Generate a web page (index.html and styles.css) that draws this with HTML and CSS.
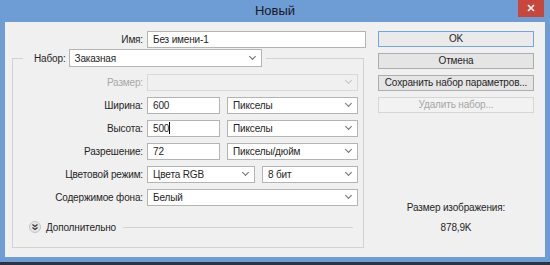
FILE: index.html
```html
<!DOCTYPE html>
<html lang="ru">
<head>
  <meta charset="UTF-8" />
  <title>Новый</title>
  <link rel="stylesheet" href="styles.css">
</head>
<body>
  <div class="window">
    <div class="titlebar">
      <div class="title">Новый</div>
      <svg class="caption-button" width="26" height="17" viewBox="0 0 26 17">
        <rect x="0" y="0" width="26" height="17" fill="#c9463d"/>
        <path d="M10 5 L16 11 M16 5 L10 11" stroke="#ffffff" stroke-width="1.6"/>
      </svg>
    </div>

    <div class="client">
      <div class="left">
        <div class="row name-row">
          <label class="label">Имя:</label>
          <div class="input name-input">Без имени-1</div>
        </div>

        <fieldset class="preset">
          <legend class="preset-legend">
            <label class="legend-label">Набор:</label>
            <div class="select preset-select">Заказная</div>
          </legend>

          <div class="rows">
            <div class="row">
              <label class="label disabled">Размер:</label>
              <div class="select field disabled-field"></div>
            </div>
            <div class="row">
              <label class="label">Ширина:</label>
              <div class="input num">600</div>
              <div class="select unit">Пикселы</div>
            </div>
            <div class="row">
              <label class="label">Высота:</label>
              <div class="input num">500<span class="caret"></span></div>
              <div class="select unit">Пикселы</div>
            </div>
            <div class="row">
              <label class="label">Разрешение:</label>
              <div class="input num">72</div>
              <div class="select unit">Пикселы/дюйм</div>
            </div>
            <div class="row">
              <label class="label">Цветовой режим:</label>
              <div class="select mode">Цвета RGB</div>
              <div class="select bits">8 бит</div>
            </div>
            <div class="row">
              <label class="label">Содержимое фона:</label>
              <div class="select field">Белый</div>
            </div>
          </div>

          <div class="advanced">
            <svg class="adv-icon" width="12" height="12" viewBox="0 0 12 12">
              <circle cx="6" cy="6" r="5.5" fill="#e6e6e6" stroke="#c4c4c4"/>
              <polyline points="3.5,3.5 6,5.5 8.5,3.5" fill="none" stroke="#333" stroke-width="1.3"/>
              <polyline points="3.5,6.5 6,8.5 8.5,6.5" fill="none" stroke="#333" stroke-width="1.3"/>
            </svg>
            <span>Дополнительно</span>
          </div>
        </fieldset>
      </div>

      <div class="right">
        <div class="button default">OK</div>
        <div class="button">Отмена</div>
        <div class="button">Сохранить набор параметров...</div>
        <div class="button disabled-button">Удалить набор...</div>

        <div class="info">
          <div>Размер изображения:</div>
          <div>878,9K</div>
        </div>
      </div>
    </div>

    <div class="taskbar"></div>
  </div>
</body>
</html>
```

FILE: styles.css
```css
body {
  margin: 0;
  font-family: "Liberation Sans", Arial, sans-serif;
  font-size: 10px;
  letter-spacing: -0.15px;
  color: #262626;
}
.window {
  width: 550px;
  height: 265px;
  background: #6e9cd4;
  display: flex;
  flex-direction: column;
  overflow: hidden;
}
.titlebar {
  height: 22px;
  flex: none;
  display: flex;
  align-items: flex-start;
  padding-right: 6px;
}
.title {
  flex: 1;
  margin-left: 32px;
  text-align: center;
  font-size: 13px;
  letter-spacing: 0;
  line-height: 22px;
  color: #1a1a1a;
}
.caption-button {
  flex: none;
  display: block;
}
.client {
  height: 235px;
  flex: none;
  margin: 0 5px;
  background: #f0f0f0;
  box-sizing: border-box;
  padding: 9px 0 0 7px;
  display: flex;
}
.taskbar {
  height: 3px;
  flex: none;
  margin-top: 5px;
  background: #2b3441;
}
.left {
  width: 354px;
}
.row {
  display: flex;
  align-items: center;
  height: 17px;
}
.label {
  width: 130px;
  margin-right: 4px;
  text-align: right;
  white-space: nowrap;
}
.name-row .label {
  width: 131px;
}
.disabled {
  color: #a7a7a7;
}
.input, .select {
  height: 17px;
  box-sizing: border-box;
  border: 1px solid #b4b4b4;
  background: white;
  padding: 0 5px;
  line-height: 15px;
  white-space: nowrap;
}
.select {
  display: flex;
  align-items: center;
}
.select::after {
  content: "";
  margin-left: auto;
  margin-right: 1px;
  width: 4px;
  height: 4px;
  border-right: 1.3px solid #707070;
  border-bottom: 1.3px solid #707070;
  transform: translateY(-2px) rotate(45deg);
}
.name-input {
  width: 219px;
}
.preset {
  width: 352px;
  box-sizing: border-box;
  margin: 1px 0 0 0;
  padding: 7px 0 13px 0;
  border: 1px solid #d2d2d2;
}
.preset-legend {
  margin-left: 10px;
  padding: 0 4px 0 11px;
  display: flex;
  align-items: center;
}
.legend-label {
  margin-right: 3px;
}
.preset-select {
  width: 193px;
  height: 18px;
}
.rows {
  display: flex;
  flex-direction: column;
  gap: 6px;
}
.field {
  width: 211px;
}
.disabled-field {
  background: #f0f0f0;
  border-color: #d9d9d9;
}
.disabled-field::after {
  border-color: #c4c4c4;
}
.num {
  width: 73px;
}
.unit {
  width: 131px;
  margin-left: 7px;
}
.mode {
  width: 108px;
}
.bits {
  width: 96px;
  margin-left: 7px;
}
.caret {
  display: inline-block;
  width: 1px;
  height: 12px;
  background: #000;
  vertical-align: -2px;
}
.advanced {
  display: flex;
  align-items: center;
  gap: 5px;
  margin: 14px 10px 0 16px;
  height: 14px;
}
.advanced::after {
  content: "";
  flex: 1;
  height: 1px;
  background: #d2d2d2;
  margin-left: 2px;
}
.right {
  width: 156px;
  margin-left: 12px;
  display: flex;
  flex-direction: column;
  gap: 6px;
}
.button {
  height: 16px;
  box-sizing: border-box;
  border: 1px solid #adadad;
  background: #e5e5e5;
  text-align: center;
  line-height: 14px;
  white-space: nowrap;
}
.default {
  border-color: #6ea8e0;
  background: #eaeaea;
}
.disabled-button {
  border-color: #d5d5d5;
  background: #f2f2f2;
  color: #a5a5a5;
}
.info {
  margin-top: 79px;
  text-align: center;
  line-height: 20px;
}
```
